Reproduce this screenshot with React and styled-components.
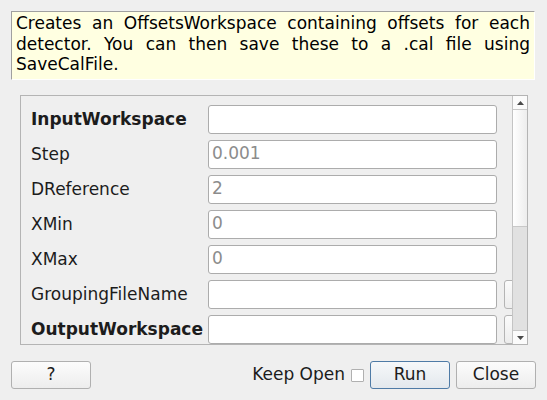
import React from 'react'
import styled, { createGlobalStyle } from 'styled-components'

const GlobalStyle = createGlobalStyle`
  html, body {
    margin: 0;
    padding: 0;
    background: #efefef;
  }
  body {
    font-family: "DejaVu Sans", "Noto Sans", sans-serif;
    font-size: 17px;
    color: #1c1c1c;
  }
`

const properties = [
  { name: 'InputWorkspace', value: '', bold: true, browse: false },
  { name: 'Step', value: '0.001' },
  { name: 'DReference', value: '2' },
  { name: 'XMin', value: '0' },
  { name: 'XMax', value: '0' },
  { name: 'GroupingFileName', value: '', browse: true },
  { name: 'OutputWorkspace', value: '', bold: true, browse: true },
]

const App = () => {
  return (
    <Dialog>
      <GlobalStyle />
      <Description>
        Creates an OffsetsWorkspace containing offsets for each detector. You can then save
        these to a .cal file using SaveCalFile.
      </Description>

      <Frame>
        <Viewport>
          <PropertyGrid>
            {properties.map((p) => (
              <React.Fragment key={p.name}>
                <Label $bold={p.bold}>{p.name}</Label>
                <Field $muted={!!p.value}>{p.value}</Field>
                {p.browse ? <BrowseButton /> : <span />}
              </React.Fragment>
            ))}
          </PropertyGrid>
        </Viewport>
        <ScrollBar>
          <ArrowButton>
            <Arrow viewBox="0 0 7 4"><path d="M0 4 L3.5 0 L7 4 Z" /></Arrow>
          </ArrowButton>
          <Handle />
          <Groove />
          <ArrowButton $bottom>
            <Arrow viewBox="0 0 7 4"><path d="M0 0 L3.5 4 L7 0 Z" /></Arrow>
          </ArrowButton>
        </ScrollBar>
      </Frame>

      <ButtonRow>
        <Button>?</Button>
        <RightGroup>
          <KeepOpen>
            <span>Keep Open</span>
            <CheckBox />
          </KeepOpen>
          <Button $default>Run</Button>
          <Button>Close</Button>
        </RightGroup>
      </ButtonRow>
    </Dialog>
  )
}

export default App

const Dialog = styled.div`
width: 547px;
height: 400px;
box-sizing: border-box;
padding-top: 11px;
display: flex;
flex-direction: column;
`

const Description = styled.div`
margin: 0 12px 0 11px;
height: 69px;
box-sizing: border-box;
background: #ffffe1;
border-top: 1px solid #a0a0a0;
border-left: 1px solid #a0a0a0;
border-right: 1px solid #ffffff;
border-bottom: 1px solid #ffffff;
padding: 1px 4px 0 4px;
line-height: 20.5px;
text-align: justify;
color: #000;
`

const Frame = styled.div`
margin: 15px 0 0 20px;
width: 508px;
height: 250px;
box-sizing: border-box;
border: 1px solid #b4b4b4;
display: flex;
`

const Viewport = styled.div`
flex: 1;
overflow: hidden;
`

const PropertyGrid = styled.div`
display: grid;
grid-template-columns: 170px 289px 40px;
column-gap: 7px;
row-gap: 6px;
padding: 9px 0 0 10px;
align-items: center;
`

const Label = styled.div`
font-weight: ${(p) => (p.$bold ? 'bold' : 'normal')};
white-space: nowrap;
padding-bottom: 1px;
`

const Field = styled.div`
height: 29px;
box-sizing: border-box;
background: #fff;
border: 1px solid #acacac;
border-radius: 3px;
padding: 0 3px 2px;
line-height: 25px;
color: ${(p) => (p.$muted ? '#8c8c8c' : '#1c1c1c')};
`

const BrowseButton = styled.div`
height: 29px;
box-sizing: border-box;
border: 1px solid #b4b4b4;
border-radius: 3px;
background: linear-gradient(#fbfbfb, #ececec);
`

const ScrollBar = styled.div`
width: 15px;
box-sizing: border-box;
border-left: 1px solid #c4c4c4;
display: flex;
flex-direction: column;
background: #fafafa;
`

const ArrowButton = styled.div`
height: ${(p) => (p.$bottom ? '14px' : '13px')};
display: flex;
align-items: center;
justify-content: center;
background: #fbfbfb;
border-top: ${(p) => (p.$bottom ? '1px solid #c8c8c8' : 'none')};
box-sizing: border-box;
`

const Arrow = styled.svg`
width: 7px;
height: 4px;
fill: #4a4a4a;
`

const Handle = styled.div`
height: 118px;
box-sizing: border-box;
border-top: 1px solid #c8c8c8;
border-bottom: 1px solid #c8c8c8;
background: linear-gradient(to right, #ffffff, #ededed);
`

const Groove = styled.div`
flex: 1;
background: #e1e1e1;
`

const ButtonRow = styled.div`
margin-top: 16px;
padding: 0 11px;
display: flex;
justify-content: space-between;
align-items: center;
`

const RightGroup = styled.div`
display: flex;
align-items: center;
gap: 6px;
`

const KeepOpen = styled.label`
display: flex;
align-items: center;
gap: 6px;
& > span {
  padding-bottom: 2px;
}
`

const CheckBox = styled.span`
width: 13px;
height: 13px;
box-sizing: border-box;
background: #fff;
border: 1px solid #b0b0b0;
border-radius: 1px;
`

const Button = styled.div`
width: 80px;
height: 28px;
box-sizing: border-box;
border: 1px solid ${(p) => (p.$default ? '#4f7ba6' : '#b0b0b0')};
border-radius: 3px;
background: ${(p) =>
  p.$default
    ? 'linear-gradient(#f6f8fa, #e3e8ed)'
    : 'linear-gradient(#fcfcfc, #ededed)'};
text-align: center;
line-height: 24px;
padding-bottom: 2px;
color: #1c1c1c;
`
